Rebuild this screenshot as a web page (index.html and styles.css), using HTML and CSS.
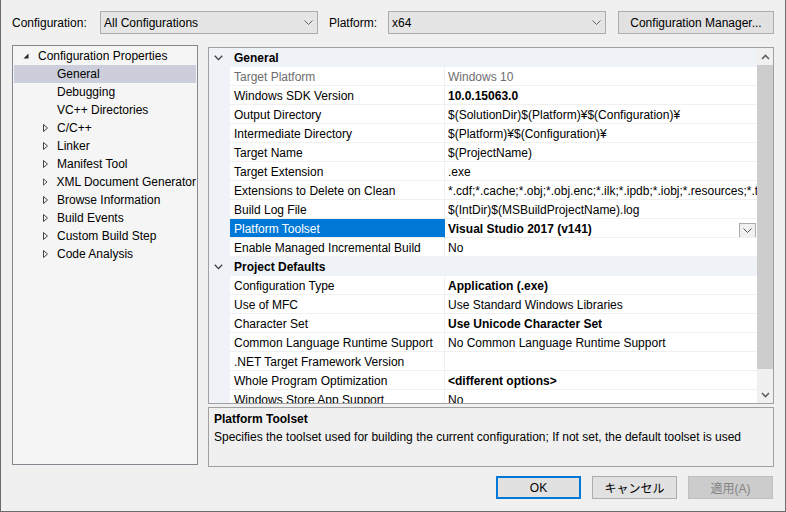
FILE: index.html
```
<!DOCTYPE html>
<html lang="en">
<head>
<meta charset="utf-8">
<title>Property Pages</title>
<link rel="stylesheet" href="styles.css">
</head>
<body>
<div class="window">
  <div class="toolbar">
    <span class="tb-label cfg-label">Configuration:</span>
    <div class="combo">
      <span class="combo-text">All Configurations</span>
      <svg class="combo-chev" width="9" height="5" viewBox="0 0 9 5"><path d="M0.5 0.5 L4.5 4.5 L8.5 0.5" fill="none" stroke="#606060" stroke-width="1"/></svg>
    </div>
    <span class="tb-label plat-label">Platform:</span>
    <div class="combo">
      <span class="combo-text">x64</span>
      <svg class="combo-chev" width="9" height="5" viewBox="0 0 9 5"><path d="M0.5 0.5 L4.5 4.5 L8.5 0.5" fill="none" stroke="#606060" stroke-width="1"/></svg>
    </div>
    <button class="btn cfg-mgr">Configuration Manager...</button>
  </div>

  <div class="main">
    <div class="tree">
      <div class="tree-row lvl0">
        <svg class="tri" width="6" height="6" viewBox="0 0 6 6"><path d="M5.5 0.5 L5.5 5.5 L0.5 5.5 Z" fill="#262626"/></svg>
        <span>Configuration Properties</span>
      </div>
      <div class="tree-row lvl1 selected"><span>General</span></div>
      <div class="tree-row lvl1"><span>Debugging</span></div>
      <div class="tree-row lvl1"><span>VC++ Directories</span></div>
      <div class="tree-row lvl1 has-kids"><svg class="tri-c" width="6" height="8" viewBox="0 0 6 8"><path d="M0.5 0.5 L4.5 4 L0.5 7.5 Z" fill="none" stroke="#404040" stroke-width="1"/></svg><span>C/C++</span></div>
      <div class="tree-row lvl1 has-kids"><svg class="tri-c" width="6" height="8" viewBox="0 0 6 8"><path d="M0.5 0.5 L4.5 4 L0.5 7.5 Z" fill="none" stroke="#404040" stroke-width="1"/></svg><span>Linker</span></div>
      <div class="tree-row lvl1 has-kids"><svg class="tri-c" width="6" height="8" viewBox="0 0 6 8"><path d="M0.5 0.5 L4.5 4 L0.5 7.5 Z" fill="none" stroke="#404040" stroke-width="1"/></svg><span>Manifest Tool</span></div>
      <div class="tree-row lvl1 has-kids"><svg class="tri-c" width="6" height="8" viewBox="0 0 6 8"><path d="M0.5 0.5 L4.5 4 L0.5 7.5 Z" fill="none" stroke="#404040" stroke-width="1"/></svg><span>XML Document Generator</span></div>
      <div class="tree-row lvl1 has-kids"><svg class="tri-c" width="6" height="8" viewBox="0 0 6 8"><path d="M0.5 0.5 L4.5 4 L0.5 7.5 Z" fill="none" stroke="#404040" stroke-width="1"/></svg><span>Browse Information</span></div>
      <div class="tree-row lvl1 has-kids"><svg class="tri-c" width="6" height="8" viewBox="0 0 6 8"><path d="M0.5 0.5 L4.5 4 L0.5 7.5 Z" fill="none" stroke="#404040" stroke-width="1"/></svg><span>Build Events</span></div>
      <div class="tree-row lvl1 has-kids"><svg class="tri-c" width="6" height="8" viewBox="0 0 6 8"><path d="M0.5 0.5 L4.5 4 L0.5 7.5 Z" fill="none" stroke="#404040" stroke-width="1"/></svg><span>Custom Build Step</span></div>
      <div class="tree-row lvl1 has-kids"><svg class="tri-c" width="6" height="8" viewBox="0 0 6 8"><path d="M0.5 0.5 L4.5 4 L0.5 7.5 Z" fill="none" stroke="#404040" stroke-width="1"/></svg><span>Code Analysis</span></div>
    </div>

    <div class="right">
      <div class="grid">
        <div class="rows">
          <div class="cat-row">
            <div class="gutter"><svg width="9" height="6" viewBox="0 0 9 6"><path d="M0.8 0.8 L4.5 4.6 L8.2 0.8" fill="none" stroke="#3c3c3c" stroke-width="1.3"/></svg></div>
            <div class="cat-name">General</div>
          </div>
          <div class="prop-row disabled"><div class="gutter"></div><div class="pname">Target Platform</div><div class="pval">Windows 10</div></div>
          <div class="prop-row"><div class="gutter"></div><div class="pname">Windows SDK Version</div><div class="pval bold">10.0.15063.0</div></div>
          <div class="prop-row"><div class="gutter"></div><div class="pname">Output Directory</div><div class="pval">$(SolutionDir)$(Platform)¥$(Configuration)¥</div></div>
          <div class="prop-row"><div class="gutter"></div><div class="pname">Intermediate Directory</div><div class="pval">$(Platform)¥$(Configuration)¥</div></div>
          <div class="prop-row"><div class="gutter"></div><div class="pname">Target Name</div><div class="pval">$(ProjectName)</div></div>
          <div class="prop-row"><div class="gutter"></div><div class="pname">Target Extension</div><div class="pval">.exe</div></div>
          <div class="prop-row"><div class="gutter"></div><div class="pname">Extensions to Delete on Clean</div><div class="pval">*.cdf;*.cache;*.obj;*.obj.enc;*.ilk;*.ipdb;*.iobj;*.resources;*.tlb;*.tli;*.tlh;*.tmp;*.rsp</div></div>
          <div class="prop-row"><div class="gutter"></div><div class="pname">Build Log File</div><div class="pval">$(IntDir)$(MSBuildProjectName).log</div></div>
          <div class="prop-row selected"><div class="gutter"></div><div class="pname">Platform Toolset</div>
            <div class="pval bold"><span class="pval-text">Visual Studio 2017 (v141)</span>
              <span class="dd-btn"><svg width="9" height="5" viewBox="0 0 9 5"><path d="M0.5 0.5 L4.5 4.5 L8.5 0.5" fill="none" stroke="#505050" stroke-width="1"/></svg></span>
            </div>
          </div>
          <div class="prop-row"><div class="gutter"></div><div class="pname">Enable Managed Incremental Build</div><div class="pval">No</div></div>
          <div class="cat-row">
            <div class="gutter"><svg width="9" height="6" viewBox="0 0 9 6"><path d="M0.8 0.8 L4.5 4.6 L8.2 0.8" fill="none" stroke="#3c3c3c" stroke-width="1.3"/></svg></div>
            <div class="cat-name">Project Defaults</div>
          </div>
          <div class="prop-row"><div class="gutter"></div><div class="pname">Configuration Type</div><div class="pval bold">Application (.exe)</div></div>
          <div class="prop-row"><div class="gutter"></div><div class="pname">Use of MFC</div><div class="pval">Use Standard Windows Libraries</div></div>
          <div class="prop-row"><div class="gutter"></div><div class="pname">Character Set</div><div class="pval bold">Use Unicode Character Set</div></div>
          <div class="prop-row"><div class="gutter"></div><div class="pname">Common Language Runtime Support</div><div class="pval">No Common Language Runtime Support</div></div>
          <div class="prop-row"><div class="gutter"></div><div class="pname">.NET Target Framework Version</div><div class="pval"></div></div>
          <div class="prop-row"><div class="gutter"></div><div class="pname">Whole Program Optimization</div><div class="pval bold">&lt;different options&gt;</div></div>
          <div class="prop-row"><div class="gutter"></div><div class="pname">Windows Store App Support</div><div class="pval">No</div></div>
        </div>
        <div class="vscroll">
          <div class="sb-arrow"><svg width="9" height="6" viewBox="0 0 9 6"><path d="M1 5 L4.5 1.5 L8 5" fill="none" stroke="#606060" stroke-width="1.6"/></svg></div>
          <div class="sb-track"><div class="sb-thumb"></div></div>
          <div class="sb-arrow"><svg width="9" height="6" viewBox="0 0 9 6"><path d="M1 1 L4.5 4.5 L8 1" fill="none" stroke="#606060" stroke-width="1.6"/></svg></div>
        </div>
      </div>
      <div class="desc">
        <div class="desc-title">Platform Toolset</div>
        <div class="desc-text">Specifies the toolset used for building the current configuration; If not set, the default toolset is used</div>
      </div>
    </div>
  </div>

  <div class="buttons">
    <button class="btn dlg default">OK</button>
    <button class="btn dlg">キャンセル</button>
    <button class="btn dlg disabled">適用(A)</button>
  </div>
</div>
</body>
</html>
```
FILE: styles.css
```
* { box-sizing: border-box; }
html, body { margin: 0; padding: 0; }
body {
  width: 786px;
  height: 512px;
  overflow: hidden;
  font-family: "Liberation Sans", "Noto Sans CJK JP", sans-serif;
  font-size: 12px;
  color: #000;
  background: #f0f0f0;
}
.window {
  width: 786px;
  height: 512px;
  border-left: 1px solid #6b6b6b;
  border-right: 1px solid #6b6b6b;
  border-bottom: 1px solid #6b6b6b;
  padding: 11px 0 0 11px;
}

/* toolbar */
.toolbar {
  display: flex;
  align-items: center;
  height: 23px;
}
.tb-label { white-space: nowrap; }
.cfg-label { width: 88px; }
.plat-label { width: 59px; margin-left: 11px; }
.combo {
  width: 218px;
  height: 23px;
  display: flex;
  align-items: center;
  background: #e5e5e5;
  border: 1px solid #acacac;
  padding-left: 3px;
}
.combo-text { flex: 1; }
.combo-chev { margin-right: 4px; }
.btn {
  font-family: "Liberation Sans", "Noto Sans CJK JP", sans-serif;
  font-size: 12px;
  color: #000;
  background: #e1e1e1;
  border: 1px solid #adadad;
  padding: 0;
  height: 23px;
}
.cfg-mgr { width: 156px; margin-left: 12px; }

/* main */
.main {
  display: flex;
  margin-top: 11px;
}
.tree {
  width: 186px;
  height: 420px;
  background: #f5f5f5;
  border: 1px solid #828790;
  padding: 1px 1px 0 1px;
}
.tree-row {
  height: 18px;
  display: flex;
  align-items: center;
  white-space: nowrap;
}
.tree-row.lvl0 { padding-left: 9px; }
.tree-row.lvl0 .tri { margin-right: 9px; margin-top: -1px; }
.tree-row.lvl1 { padding-left: 43px; }
.tree-row.has-kids { padding-left: 29px; }
.tree-row .tri-c { margin-right: 8px; }
.tree-row.selected { background: #cccedb; }

.right {
  width: 566px;
  margin-left: 10px;
  margin-top: 2px;
}
.grid {
  height: 357px;
  border: 1px solid #a0a0a0;
  background: #fff;
  display: flex;
}
.rows {
  flex: 1;
  overflow: hidden;
}
.prop-row, .cat-row {
  display: flex;
  height: 19px;
  white-space: nowrap;
}
.gutter {
  width: 21px;
  flex: none;
  background: #eff2f7;
  display: flex;
  align-items: center;
  padding-left: 5px;
}
.cat-row { background: #eff2f7; }
.cat-name {
  font-weight: bold;
  padding: 1px 0 0 4px;
  line-height: 18px;
}
.pname {
  width: 215px;
  flex: none;
  padding: 2px 0 0 4px;
  line-height: 16px;
  border-right: 1px solid #f0f0f0;
  border-bottom: 1px solid #f0f0f0;
  overflow: hidden;
}
.pval {
  flex: 1;
  min-width: 0;
  padding: 2px 0 0 3px;
  line-height: 16px;
  border-bottom: 1px solid #f0f0f0;
  overflow: hidden;
  display: flex;
  align-items: flex-start;
}
.pval.bold { font-weight: bold; }
.pval-text { flex: 1; }
.prop-row.disabled .pname,
.prop-row.disabled .pval { color: #6d6d6d; }
.prop-row.selected .pname {
  background: #0078d7;
  color: #fff;
  border-right-color: #0078d7;
}
.dd-btn {
  width: 17px;
  height: 15px;
  margin: 2px 1px 0 0;
  border: 1px solid #acacac;
  background: #f0f0f0;
  display: flex;
  align-items: center;
  justify-content: center;
}

.vscroll {
  width: 16px;
  flex: none;
  background: #f0f0f0;
  display: flex;
  flex-direction: column;
}
.sb-arrow {
  height: 17px;
  display: flex;
  align-items: center;
  justify-content: center;
}
.sb-track { flex: 1; }
.sb-thumb {
  height: 304px;
  background: #cdcdcd;
}

.desc {
  margin-top: 3px;
  height: 60px;
  border: 1px solid #a0a0a0;
  background: #f0f0f0;
  padding: 2px 5px 0 5px;
}
.desc-title { font-weight: bold; line-height: 18px; }
.desc-text { line-height: 18px; white-space: nowrap; }

.buttons {
  display: flex;
  justify-content: flex-end;
  margin-top: 9px;
  padding-right: 12px;
}
.btn.dlg { width: 85px; margin-left: 11px; }
.btn.dlg.default { border: 2px solid #0078d7; }
.btn.dlg.disabled {
  background: #cccccc;
  border-color: #bfbfbf;
  color: #838383;
}
```
